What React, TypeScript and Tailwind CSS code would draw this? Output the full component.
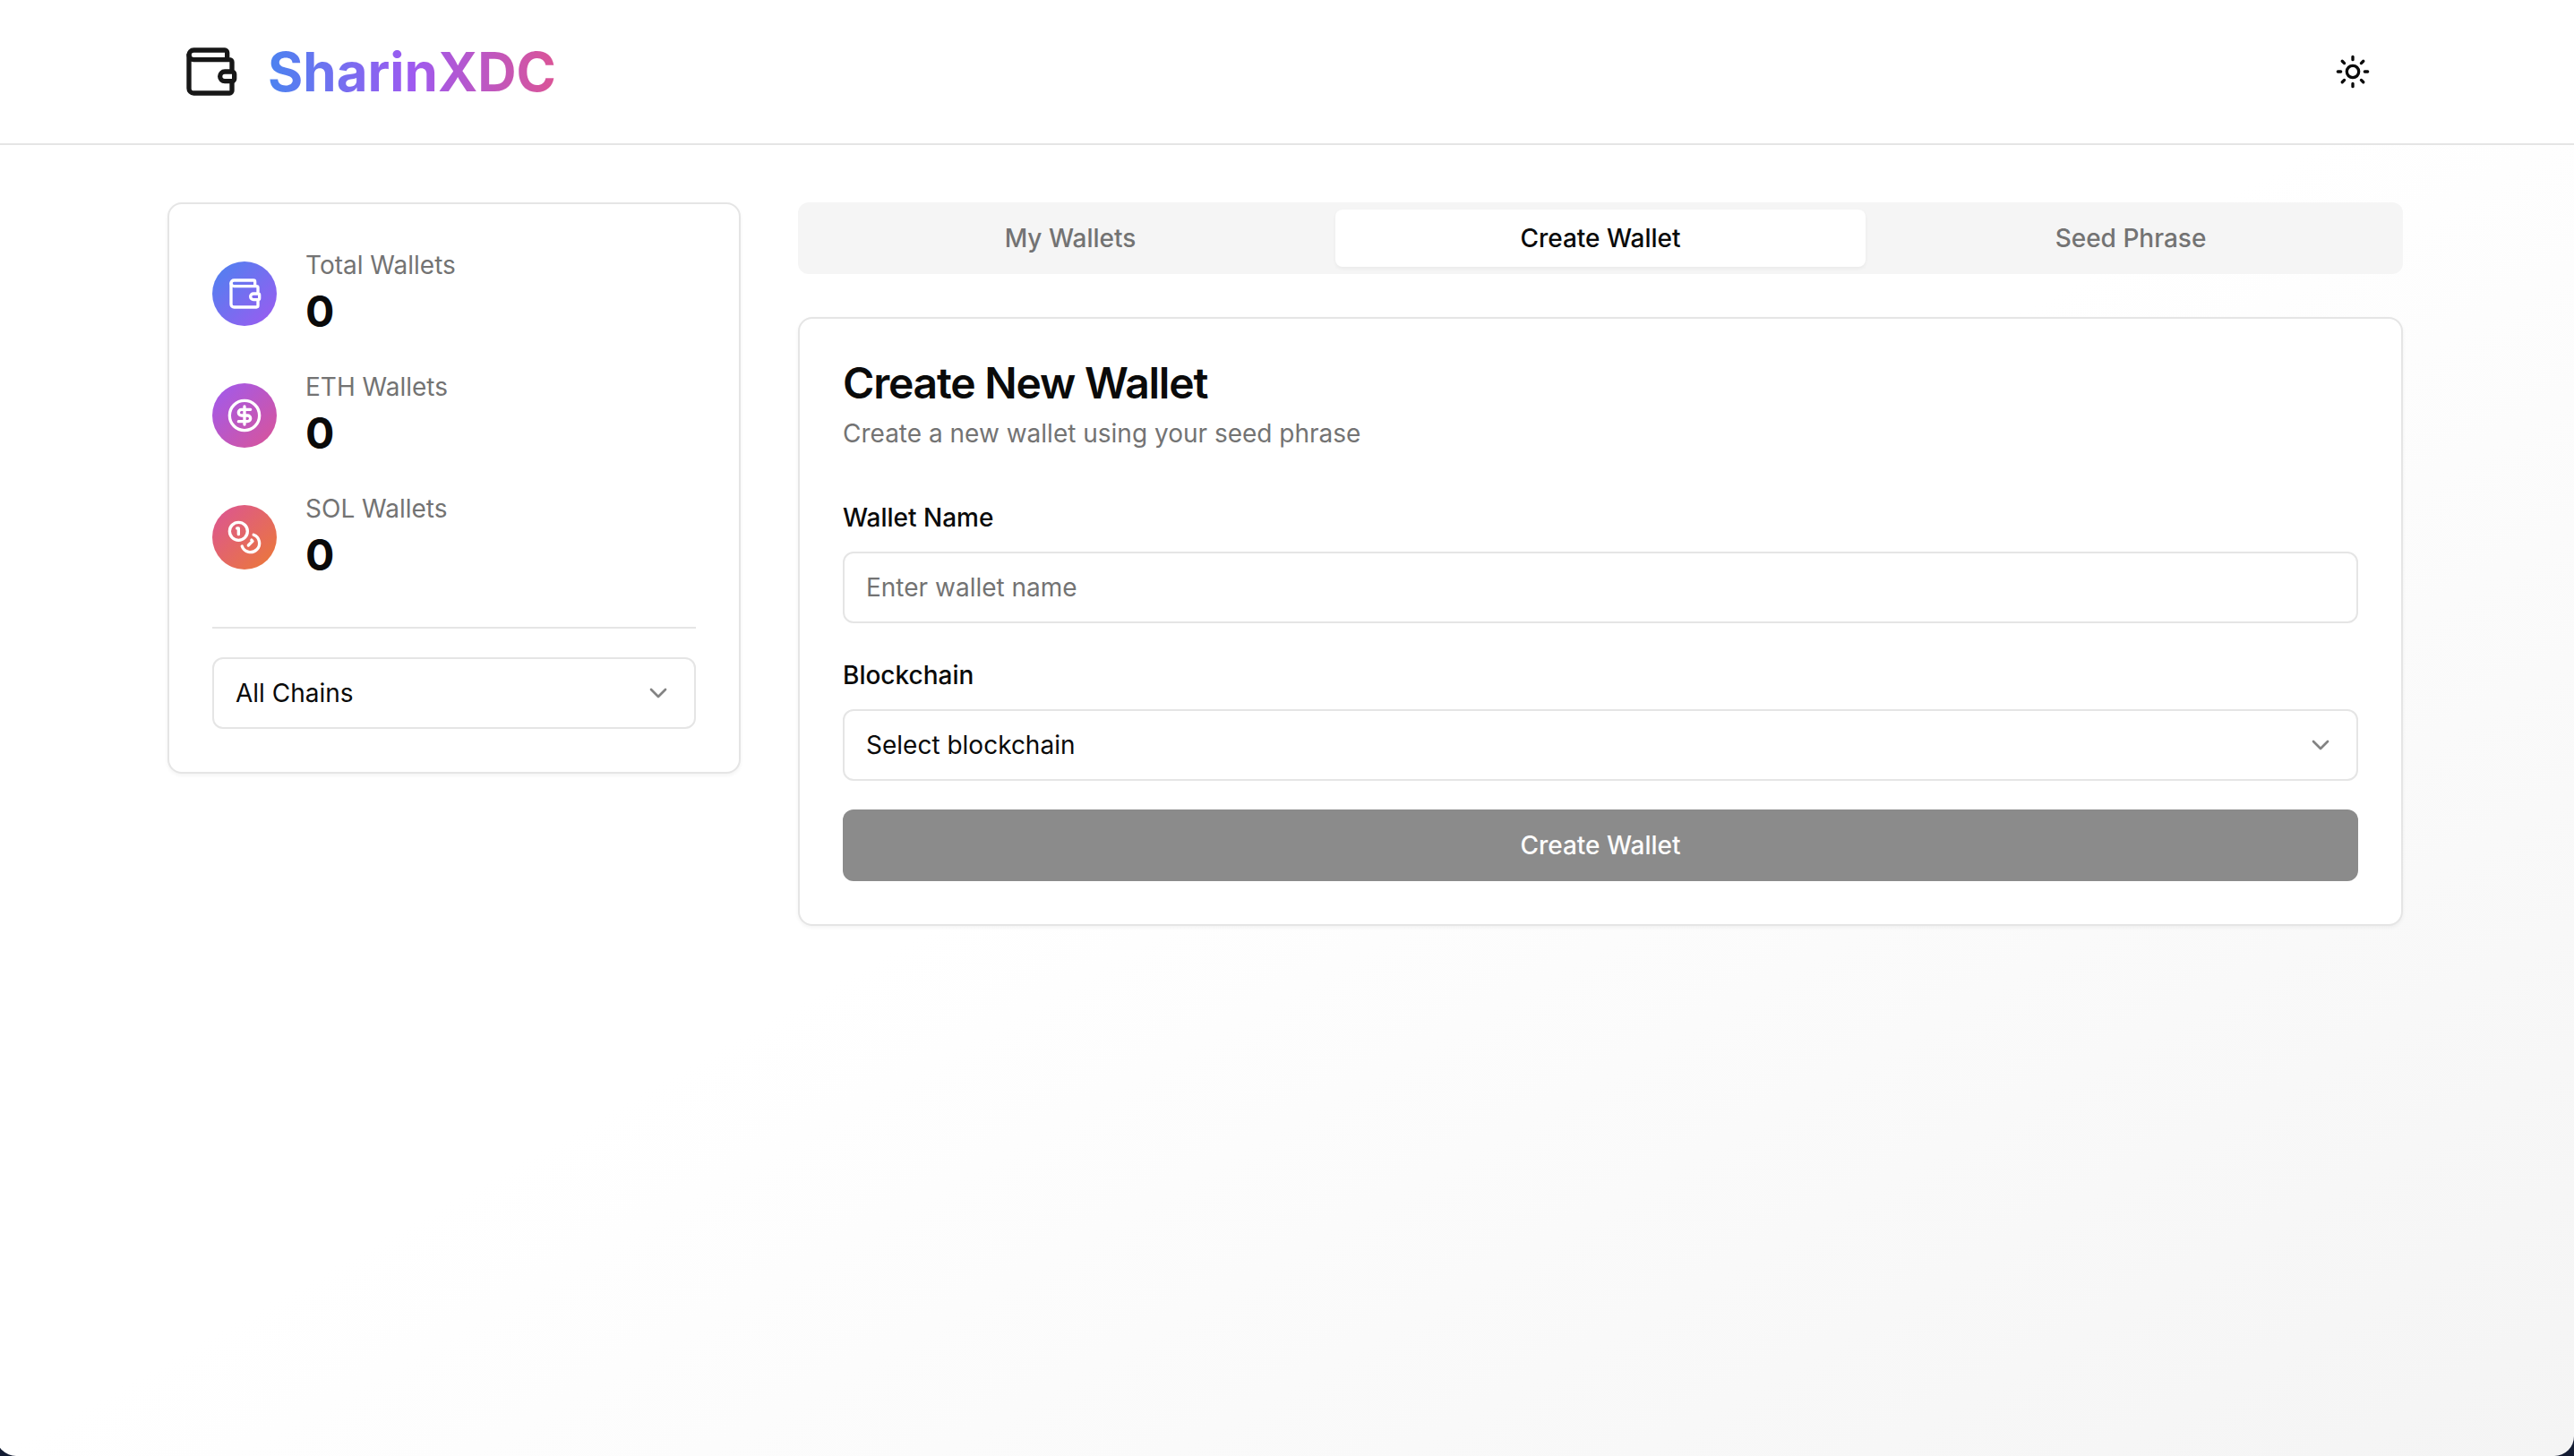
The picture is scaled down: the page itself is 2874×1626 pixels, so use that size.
import { useState } from "react";
import type { ReactNode } from "react";
import { ChevronDown, CircleDollarSign, Coins } from "lucide-react";

function WalletIcon({ className, strokeWidth = 2 }: { className: string; strokeWidth?: number }) {
  return (
    <svg
      viewBox="0 0 24 24"
      fill="none"
      stroke="currentColor"
      strokeWidth={strokeWidth}
      strokeLinecap="round"
      strokeLinejoin="round"
      className={className}
      aria-hidden="true"
    >
      <path d="M19 7V4a1 1 0 0 0-1-1H5a2 2 0 0 0 0 4h15a1 1 0 0 1 1 1v4h-3a2 2 0 0 0 0 4h3a1 1 0 0 0 1-1v-2a1 1 0 0 0-1-1" />
      <path d="M3 5v14a2 2 0 0 0 2 2h15a1 1 0 0 0 1-1v-4" />
    </svg>
  );
}

function SunIcon() {
  return (
    <svg
      viewBox="0 0 24 24"
      fill="none"
      stroke="currentColor"
      strokeWidth={2}
      strokeLinecap="round"
      className="size-10"
      aria-hidden="true"
    >
      <circle cx="12" cy="12" r="4" />
      <path d="M12 2v2M12 20v2M4.93 4.93l1.41 1.41M17.66 17.66l1.41 1.41M2 12h2M20 12h2M6.34 17.66l-1.41 1.41M19.07 4.93l-1.41 1.41" />
    </svg>
  );
}

function Stat({ label, value, tone, icon }: { label: string; value: number; tone: string; icon: ReactNode }) {
  return (
    <div className="flex items-center gap-8">
      <div className={`rounded-full p-4 text-white ${tone}`}>{icon}</div>
      <div>
        <p className="text-[28px] leading-10 text-[#737373]">{label}</p>
        <p className="text-5xl leading-16 font-bold">{value}</p>
      </div>
    </div>
  );
}

function SelectBox({ id, label, options }: { id: string; label?: string; options: string[] }) {
  return (
    <div className="grid items-center">
      <select
        id={id}
        aria-label={label}
        className="col-start-1 row-start-1 h-20 w-full appearance-none rounded-xl border-2 border-[#e5e5e5] bg-white px-6 text-[28px] leading-10"
      >
        {options.map((option) => (
          <option key={option}>{option}</option>
        ))}
      </select>
      <ChevronDown className="pointer-events-none col-start-1 row-start-1 mr-[26px] size-8 justify-self-end opacity-50" />
    </div>
  );
}

const card = "rounded-2xl border-2 border-[#e5e5e5] bg-white shadow-[0_2px_4px_rgba(0,0,0,0.05)]";
const tabs = ["My Wallets", "Create Wallet", "Seed Phrase"];

export default function App() {
  const [active, setActive] = useState("Create Wallet");

  return (
    <div className="min-h-screen overflow-hidden bg-[#141c33] font-[Inter,sans-serif] text-[#0a0a0a]">
      <div className="-ml-1 min-h-screen rounded-b-[22px] bg-linear-to-br from-white via-white to-[#f4f4f4]">
        <header className="border-b-2 border-[#e5e5e5] bg-white">
          <div className="mx-auto flex h-40 max-w-[2560px] items-center justify-between px-8">
            <div className="flex items-center gap-8 pl-4">
              <WalletIcon className="size-16 text-[#171717]" />
              <h1 className="bg-[linear-gradient(to_right,#4b83f0,#9e5af0,#db5496)] bg-clip-text text-[60px] leading-[72px] font-bold text-transparent">
                SharinXDC
              </h1>
            </div>
            <button type="button" aria-label="Toggle theme" className="mr-4 flex size-20 items-center justify-center">
              <SunIcon />
            </button>
          </div>
        </header>

        <main className="mx-auto flex max-w-[2560px] items-start gap-16 px-8 py-16">
          <aside className={`w-[640px] shrink-0 p-12 ${card}`}>
            <div className="flex flex-col gap-8">
              <Stat
                label="Total Wallets"
                value={0}
                tone="bg-[linear-gradient(to_bottom_right,#4b83f0,#9e5af0)]"
                icon={<WalletIcon className="size-10" />}
              />
              <Stat
                label="ETH Wallets"
                value={0}
                tone="bg-[linear-gradient(to_bottom_right,#9e5af0,#db5496)]"
                icon={<CircleDollarSign className="size-10" />}
              />
              <Stat
                label="SOL Wallets"
                value={0}
                tone="bg-[linear-gradient(to_bottom_right,#db5496,#ec7a35)]"
                icon={<Coins className="size-10" />}
              />
            </div>
            <div className="mt-12 border-t-2 border-[#e5e5e5] pt-8">
              <SelectBox id="chain-filter" label="Filter by chain" options={["All Chains", "Ethereum", "Solana"]} />
            </div>
          </aside>

          <div className="min-w-0 grow">
            <div role="tablist" className="grid h-20 grid-cols-3 rounded-xl bg-[#f5f5f5] p-2">
              {tabs.map((tab) => (
                <button
                  key={tab}
                  type="button"
                  role="tab"
                  aria-selected={tab === active}
                  onClick={() => setActive(tab)}
                  className={
                    tab === active
                      ? "rounded-lg bg-white text-[28px] leading-10 font-medium text-[#0a0a0a] shadow-[0_2px_4px_rgba(0,0,0,0.05)]"
                      : "rounded-lg text-[28px] leading-10 font-medium text-[#737373]"
                  }
                >
                  {tab}
                </button>
              ))}
            </div>

            <section className={`mt-12 p-12 ${card}`}>
              <h2 className="text-5xl leading-12 font-semibold tracking-tight">Create New Wallet</h2>
              <p className="mt-3 text-[28px] leading-10 text-[#737373]">Create a new wallet using your seed phrase</p>

              <form className="mt-12 flex flex-col gap-8" onSubmit={(event) => event.preventDefault()}>
                <div className="flex flex-col gap-4">
                  <label htmlFor="wallet-name" className="pt-1 text-[28px] leading-11 font-medium">
                    Wallet Name
                  </label>
                  <input
                    id="wallet-name"
                    type="text"
                    placeholder="Enter wallet name"
                    className="h-20 w-full rounded-xl border-2 border-[#e5e5e5] bg-white px-6 text-[28px] leading-10 placeholder:text-[#737373]"
                  />
                </div>
                <div className="flex flex-col gap-4">
                  <label htmlFor="blockchain" className="pt-1 text-[28px] leading-11 font-medium">
                    Blockchain
                  </label>
                  <SelectBox id="blockchain" options={["Select blockchain", "Ethereum", "Solana"]} />
                </div>
                <button
                  type="submit"
                  disabled
                  className="h-20 rounded-xl bg-[#8b8b8b] text-[28px] leading-10 font-medium text-[#fcfcfc]"
                >
                  Create Wallet
                </button>
              </form>
            </section>
          </div>
        </main>
      </div>
    </div>
  );
}
